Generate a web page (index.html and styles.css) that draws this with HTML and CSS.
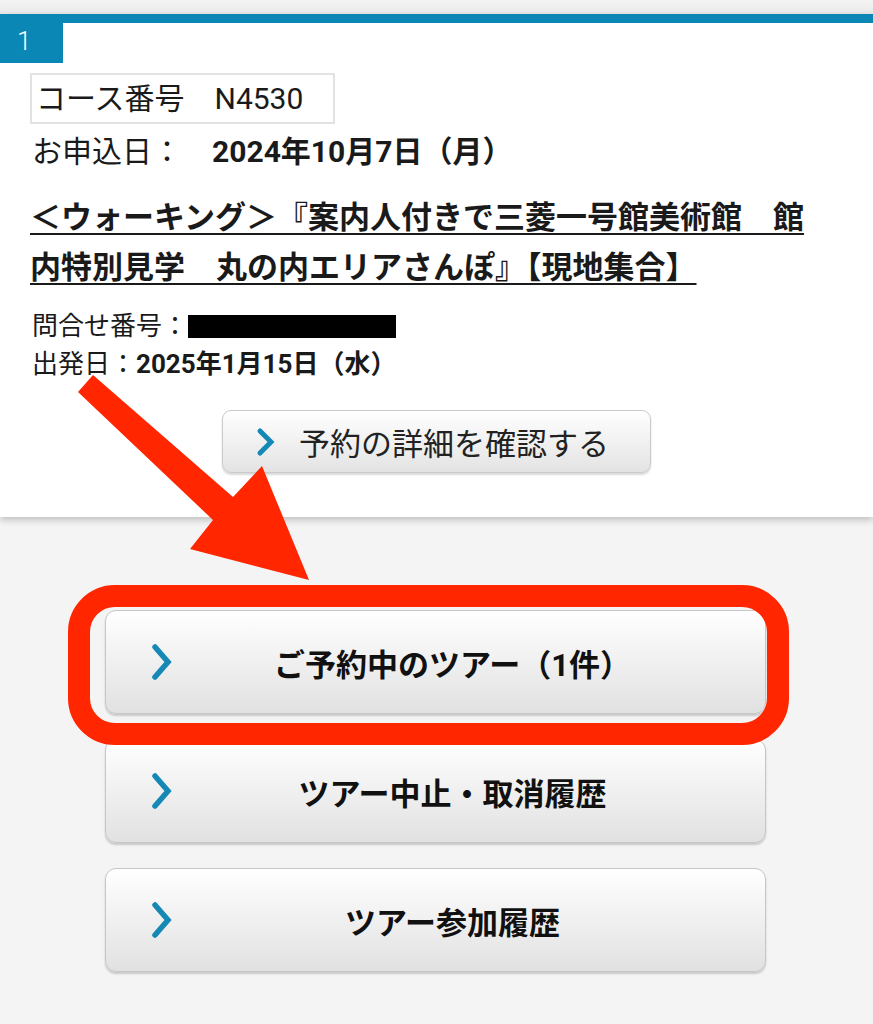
FILE: index.html
```html
<!DOCTYPE html>
<html lang="ja">
<head>
    <meta charset="UTF-8">
    <meta name="viewport" content="width=device-width, initial-scale=1.0">
    <title>ご予約中のツアー</title>
    <link rel="stylesheet" href="styles.css">
</head>
<body>
    <div class="topbar"></div>

    <section class="card">
        <div class="badge">1</div>
        <div class="card-body">
            <div class="course-no">コース番号　N4530</div>
            <p class="apply-date">お申込日：　<strong>2024年10月7日（月）</strong></p>
            <h2 class="tour-title"><a href="#">＜ウォーキング＞『案内人付きで三菱一号館美術館　館内特別見学　丸の内エリアさんぽ』【現地集合】</a></h2>
            <div class="meta-list">
                <p class="meta">問合せ番号：<span class="redacted"></span></p>
                <p class="meta">出発日：<strong>2025年1月15日（水）</strong></p>
            </div>
        </div>
        <div class="detail-wrap">
            <a href="#" class="detail-btn">
                <svg class="chevron" width="20" height="30" viewBox="0 0 20 30"><path d="M4 4 L15 15 L4 26" /></svg>
                <span>予約の詳細を確認する</span>
            </a>
        </div>
    </section>

    <nav class="menu">
        <a href="#" class="menu-btn">
            <svg class="chevron big" width="24" height="38" viewBox="0 0 24 38"><path d="M5 4 L18 19 L5 34" /></svg>
            <span class="menu-text">ご予約中のツアー（1件）</span>
        </a>
        <a href="#" class="menu-btn">
            <svg class="chevron big" width="24" height="38" viewBox="0 0 24 38"><path d="M5 4 L18 19 L5 34" /></svg>
            <span class="menu-text">ツアー中止・取消履歴</span>
        </a>
        <a href="#" class="menu-btn">
            <svg class="chevron big" width="24" height="38" viewBox="0 0 24 38"><path d="M5 4 L18 19 L5 34" /></svg>
            <span class="menu-text">ツアー参加履歴</span>
        </a>
    </nav>

    <!-- red annotation drawn over the screenshot -->
    <svg class="annotation" width="873" height="1024" viewBox="0 0 873 1024">
        <polygon points="93,375 233,497 262,466 309,580 190,549 213,520 78,392" />
        <rect x="79" y="596" width="699" height="138" rx="36" ry="36" />
    </svg>
</body>
</html>
```

FILE: styles.css
```css
:root {
    --blue: #0a87b4;
    --bg: #f4f4f4;
    --text: #1a1a1a;
    --red: #ff2600;
}

* {
    margin: 0;
    padding: 0;
    box-sizing: border-box;
}

body {
    font-family: Roboto, "Noto Sans CJK JP", sans-serif;
    background: var(--bg);
    color: var(--text);
    position: relative;
    min-height: 1024px;
}

.topbar {
    height: 14px;
    background: linear-gradient(#f4f4f4, #e9e9e9);
}

.card {
    background: #ffffff;
    border-top: 9px solid var(--blue);
    box-shadow: 0 3px 7px rgba(0, 0, 0, 0.22);
    padding-bottom: 44px;
}

.badge {
    width: 63px;
    height: 40px;
    background: var(--blue);
    color: #ffffff;
    font-size: 26px;
    font-weight: 300;
    line-height: 36px;
    padding-left: 17px;
}

.card-body {
    padding: 10px 55px 0 30px;
}

.course-no {
    display: inline-block;
    border: 2px solid #e2e2e2;
    font-size: 30px;
    line-height: 47px;
    height: 51px;
    padding: 0 30px 0 4px;
}

.apply-date {
    font-size: 30px;
    line-height: 50px;
    margin-top: 3px;
    padding-left: 2px;
}

.apply-date strong,
.meta strong {
    font-weight: 700;
}

.tour-title {
    font-size: 31px;
    line-height: 50px;
    font-weight: 700;
    margin-top: 16px;
}

.tour-title a {
    color: var(--text);
    text-decoration: underline;
    text-decoration-thickness: 2px;
    text-underline-offset: 5px;
}

.meta-list {
    margin-top: 14px;
}

.meta {
    font-size: 26px;
    line-height: 38px;
    padding-left: 2px;
}

.redacted {
    display: inline-block;
    width: 208px;
    height: 23px;
    background: #000000;
    vertical-align: -3px;
}

.detail-wrap {
    display: flex;
    justify-content: center;
    margin-top: 27px;
}

.detail-btn {
    width: 429px;
    height: 63px;
    display: flex;
    align-items: center;
    gap: 23px;
    padding-left: 33px;
    border: 1px solid #cacaca;
    border-radius: 9px;
    background: linear-gradient(#ffffff, #e3e3e3);
    box-shadow: 0 2px 2px rgba(0, 0, 0, 0.15);
    color: #222222;
    font-size: 31px;
    text-decoration: none;
}

.chevron path {
    fill: none;
    stroke: #1588b6;
    stroke-width: 5;
    stroke-linecap: round;
    stroke-linejoin: miter;
}

.chevron.big path {
    stroke-width: 5.5;
}

.menu {
    display: flex;
    flex-direction: column;
    gap: 25px;
    margin: 93px 0 0 105px;
    width: 661px;
}

.menu-btn {
    height: 104px;
    display: flex;
    align-items: center;
    padding: 0 34px 0 44px;
    border: 1px solid #c6c6c6;
    border-radius: 11px;
    background: linear-gradient(#ffffff, #e1e1e1);
    box-shadow: 0 2px 2px rgba(0, 0, 0, 0.18);
    color: #111111;
    text-decoration: none;
}

.menu-text {
    flex: 1;
    text-align: center;
    font-size: 31px;
    font-weight: 700;
}

.annotation {
    position: absolute;
    top: 0;
    left: 0;
    pointer-events: none;
}

.annotation polygon {
    fill: var(--red);
}

.annotation rect {
    fill: none;
    stroke: var(--red);
    stroke-width: 22;
}
```
